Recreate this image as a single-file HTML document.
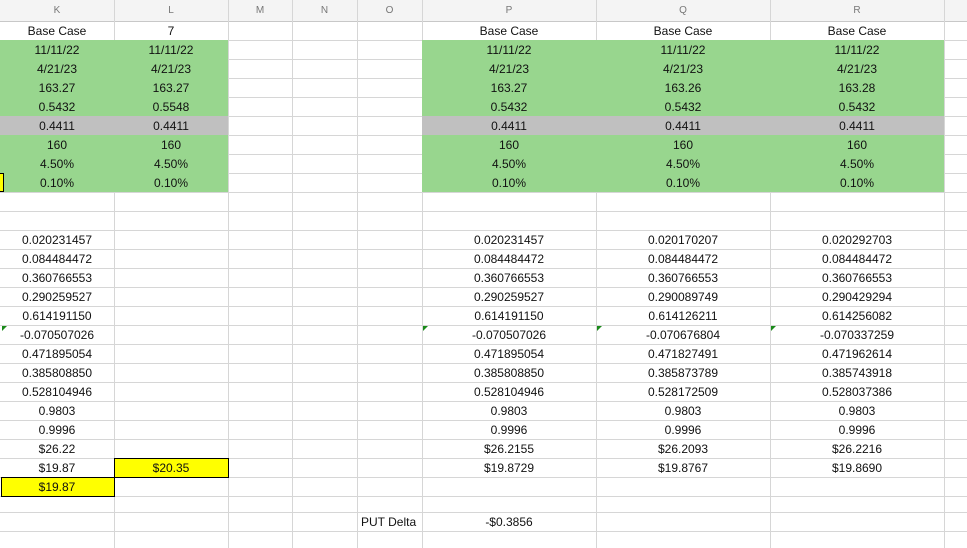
<!DOCTYPE html>
<html><head><meta charset="utf-8"><style>
body{margin:0;width:967px;height:548px;overflow:hidden;background:#fff;position:relative;font-family:"Liberation Sans",sans-serif}
.h{position:absolute;left:0;width:967px;height:1px;background:#d6d6d6}
.v{position:absolute;top:0;height:548px;width:1px;background:#d6d6d6}
.f{position:absolute}
.t{position:absolute;text-align:center;font-size:12px;line-height:19px;height:19px;color:#111;margin-top:1px}
.w{}
.hd{position:absolute;top:0;height:21px;line-height:21px;text-align:center;font-size:10px;color:#777}
.tri{position:absolute;width:0;height:0;border-top:5px solid #1a8a1a;border-right:5px solid transparent}
</style></head><body>
<div class="f" style="left:0;top:0;width:967px;height:21px;background:#f4f4f4"></div>
<div class="h" style="top:21px;background:#c8c8c8"></div>
<div class="h" style="top:40px"></div><div class="h" style="top:59px"></div><div class="h" style="top:78px"></div><div class="h" style="top:97px"></div><div class="h" style="top:116px"></div><div class="h" style="top:135px"></div><div class="h" style="top:154px"></div><div class="h" style="top:173px"></div><div class="h" style="top:192px"></div><div class="h" style="top:211px"></div><div class="h" style="top:230px"></div><div class="h" style="top:249px"></div><div class="h" style="top:268px"></div><div class="h" style="top:287px"></div><div class="h" style="top:306px"></div><div class="h" style="top:325px"></div><div class="h" style="top:344px"></div><div class="h" style="top:363px"></div><div class="h" style="top:382px"></div><div class="h" style="top:401px"></div><div class="h" style="top:420px"></div><div class="h" style="top:439px"></div><div class="h" style="top:458px"></div><div class="h" style="top:477px"></div><div class="h" style="top:496px"></div><div class="h" style="top:512px"></div><div class="h" style="top:531px"></div>
<div class="v" style="left:114px"></div><div class="v" style="left:228px"></div><div class="v" style="left:292px"></div><div class="v" style="left:357px"></div><div class="v" style="left:422px"></div><div class="v" style="left:596px"></div><div class="v" style="left:770px"></div><div class="v" style="left:944px"></div>
<div class="f" style="left:0;top:40px;width:228px;height:76px;background:#98d68e"></div>
<div class="f" style="left:0;top:116px;width:228px;height:19px;background:#c0c0c0"></div>
<div class="f" style="left:0;top:135px;width:228px;height:57px;background:#98d68e"></div>
<div class="f" style="left:422px;top:40px;width:522px;height:76px;background:#98d68e"></div>
<div class="f" style="left:422px;top:116px;width:522px;height:19px;background:#c0c0c0"></div>
<div class="f" style="left:422px;top:135px;width:522px;height:57px;background:#98d68e"></div>
<div class="f" style="left:-1px;top:173px;width:3px;height:17px;background:#ffff00;border:1px solid #000"></div>
<div class="f" style="left:114px;top:458px;width:113px;height:18px;background:#ffff00;border:1px solid #000"></div>
<div class="f" style="left:1px;top:477px;width:112px;height:18px;background:#ffff00;border:1px solid #000"></div>
<div class="tri" style="left:2px;top:326px"></div><div class="tri" style="left:423px;top:326px"></div><div class="tri" style="left:597px;top:326px"></div><div class="tri" style="left:771px;top:326px"></div>
<div class="hd" style="left:0;width:114px">K</div><div class="hd" style="left:114px;width:114px">L</div><div class="hd" style="left:228px;width:64px">M</div><div class="hd" style="left:292px;width:65px">N</div><div class="hd" style="left:357px;width:65px">O</div><div class="hd" style="left:422px;width:174px">P</div><div class="hd" style="left:596px;width:174px">Q</div><div class="hd" style="left:770px;width:174px">R</div>
<div class="t w" style="left:0;width:114px;top:21px">Base Case</div>
<div class="t" style="left:0;width:114px;top:40px">11/11/22</div>
<div class="t" style="left:0;width:114px;top:59px">4/21/23</div>
<div class="t" style="left:0;width:114px;top:78px">163.27</div>
<div class="t" style="left:0;width:114px;top:97px">0.5432</div>
<div class="t" style="left:0;width:114px;top:116px">0.4411</div>
<div class="t" style="left:0;width:114px;top:135px">160</div>
<div class="t" style="left:0;width:114px;top:154px">4.50%</div>
<div class="t" style="left:0;width:114px;top:173px">0.10%</div>
<div class="t" style="left:0;width:114px;top:230px">0.020231457</div>
<div class="t" style="left:0;width:114px;top:249px">0.084484472</div>
<div class="t" style="left:0;width:114px;top:268px">0.360766553</div>
<div class="t" style="left:0;width:114px;top:287px">0.290259527</div>
<div class="t" style="left:0;width:114px;top:306px">0.614191150</div>
<div class="t" style="left:0;width:114px;top:325px">-0.070507026</div>
<div class="t" style="left:0;width:114px;top:344px">0.471895054</div>
<div class="t" style="left:0;width:114px;top:363px">0.385808850</div>
<div class="t" style="left:0;width:114px;top:382px">0.528104946</div>
<div class="t" style="left:0;width:114px;top:401px">0.9803</div>
<div class="t" style="left:0;width:114px;top:420px">0.9996</div>
<div class="t" style="left:0;width:114px;top:439px">$26.22</div>
<div class="t" style="left:0;width:114px;top:458px">$19.87</div>
<div class="t" style="left:0;width:114px;top:477px">$19.87</div>
<div class="t" style="left:114px;width:114px;top:21px">7</div>
<div class="t" style="left:114px;width:114px;top:40px">11/11/22</div>
<div class="t" style="left:114px;width:114px;top:59px">4/21/23</div>
<div class="t" style="left:114px;width:114px;top:78px">163.27</div>
<div class="t" style="left:114px;width:114px;top:97px">0.5548</div>
<div class="t" style="left:114px;width:114px;top:116px">0.4411</div>
<div class="t" style="left:114px;width:114px;top:135px">160</div>
<div class="t" style="left:114px;width:114px;top:154px">4.50%</div>
<div class="t" style="left:114px;width:114px;top:173px">0.10%</div>
<div class="t" style="left:114px;width:114px;top:458px">$20.35</div>
<div class="t w" style="left:361px;width:60px;top:512px;text-align:left">PUT Delta</div>
<div class="t w" style="left:422px;width:174px;top:21px">Base Case</div>
<div class="t" style="left:422px;width:174px;top:40px">11/11/22</div>
<div class="t" style="left:422px;width:174px;top:59px">4/21/23</div>
<div class="t" style="left:422px;width:174px;top:78px">163.27</div>
<div class="t" style="left:422px;width:174px;top:97px">0.5432</div>
<div class="t" style="left:422px;width:174px;top:116px">0.4411</div>
<div class="t" style="left:422px;width:174px;top:135px">160</div>
<div class="t" style="left:422px;width:174px;top:154px">4.50%</div>
<div class="t" style="left:422px;width:174px;top:173px">0.10%</div>
<div class="t" style="left:422px;width:174px;top:230px">0.020231457</div>
<div class="t" style="left:422px;width:174px;top:249px">0.084484472</div>
<div class="t" style="left:422px;width:174px;top:268px">0.360766553</div>
<div class="t" style="left:422px;width:174px;top:287px">0.290259527</div>
<div class="t" style="left:422px;width:174px;top:306px">0.614191150</div>
<div class="t" style="left:422px;width:174px;top:325px">-0.070507026</div>
<div class="t" style="left:422px;width:174px;top:344px">0.471895054</div>
<div class="t" style="left:422px;width:174px;top:363px">0.385808850</div>
<div class="t" style="left:422px;width:174px;top:382px">0.528104946</div>
<div class="t" style="left:422px;width:174px;top:401px">0.9803</div>
<div class="t" style="left:422px;width:174px;top:420px">0.9996</div>
<div class="t" style="left:422px;width:174px;top:439px">$26.2155</div>
<div class="t" style="left:422px;width:174px;top:458px">$19.8729</div>
<div class="t" style="left:422px;width:174px;top:512px">-$0.3856</div>
<div class="t w" style="left:596px;width:174px;top:21px">Base Case</div>
<div class="t" style="left:596px;width:174px;top:40px">11/11/22</div>
<div class="t" style="left:596px;width:174px;top:59px">4/21/23</div>
<div class="t" style="left:596px;width:174px;top:78px">163.26</div>
<div class="t" style="left:596px;width:174px;top:97px">0.5432</div>
<div class="t" style="left:596px;width:174px;top:116px">0.4411</div>
<div class="t" style="left:596px;width:174px;top:135px">160</div>
<div class="t" style="left:596px;width:174px;top:154px">4.50%</div>
<div class="t" style="left:596px;width:174px;top:173px">0.10%</div>
<div class="t" style="left:596px;width:174px;top:230px">0.020170207</div>
<div class="t" style="left:596px;width:174px;top:249px">0.084484472</div>
<div class="t" style="left:596px;width:174px;top:268px">0.360766553</div>
<div class="t" style="left:596px;width:174px;top:287px">0.290089749</div>
<div class="t" style="left:596px;width:174px;top:306px">0.614126211</div>
<div class="t" style="left:596px;width:174px;top:325px">-0.070676804</div>
<div class="t" style="left:596px;width:174px;top:344px">0.471827491</div>
<div class="t" style="left:596px;width:174px;top:363px">0.385873789</div>
<div class="t" style="left:596px;width:174px;top:382px">0.528172509</div>
<div class="t" style="left:596px;width:174px;top:401px">0.9803</div>
<div class="t" style="left:596px;width:174px;top:420px">0.9996</div>
<div class="t" style="left:596px;width:174px;top:439px">$26.2093</div>
<div class="t" style="left:596px;width:174px;top:458px">$19.8767</div>
<div class="t w" style="left:770px;width:174px;top:21px">Base Case</div>
<div class="t" style="left:770px;width:174px;top:40px">11/11/22</div>
<div class="t" style="left:770px;width:174px;top:59px">4/21/23</div>
<div class="t" style="left:770px;width:174px;top:78px">163.28</div>
<div class="t" style="left:770px;width:174px;top:97px">0.5432</div>
<div class="t" style="left:770px;width:174px;top:116px">0.4411</div>
<div class="t" style="left:770px;width:174px;top:135px">160</div>
<div class="t" style="left:770px;width:174px;top:154px">4.50%</div>
<div class="t" style="left:770px;width:174px;top:173px">0.10%</div>
<div class="t" style="left:770px;width:174px;top:230px">0.020292703</div>
<div class="t" style="left:770px;width:174px;top:249px">0.084484472</div>
<div class="t" style="left:770px;width:174px;top:268px">0.360766553</div>
<div class="t" style="left:770px;width:174px;top:287px">0.290429294</div>
<div class="t" style="left:770px;width:174px;top:306px">0.614256082</div>
<div class="t" style="left:770px;width:174px;top:325px">-0.070337259</div>
<div class="t" style="left:770px;width:174px;top:344px">0.471962614</div>
<div class="t" style="left:770px;width:174px;top:363px">0.385743918</div>
<div class="t" style="left:770px;width:174px;top:382px">0.528037386</div>
<div class="t" style="left:770px;width:174px;top:401px">0.9803</div>
<div class="t" style="left:770px;width:174px;top:420px">0.9996</div>
<div class="t" style="left:770px;width:174px;top:439px">$26.2216</div>
<div class="t" style="left:770px;width:174px;top:458px">$19.8690</div>
</body></html>
